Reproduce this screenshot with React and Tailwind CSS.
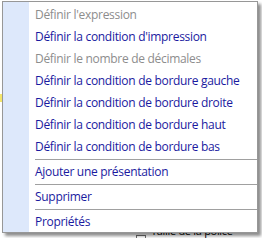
const items = [
  { label: "Définir l'expression", disabled: true },
  { label: "Définir la condition d'impression" },
  { label: "Définir le nombre de décimales", disabled: true },
  { label: "Définir la condition de bordure gauche" },
  { label: "Définir la condition de bordure droite" },
  { label: "Définir la condition de bordure haut" },
  { label: "Définir la condition de bordure bas" },
  { sep: true },
  { label: "Ajouter une présentation" },
  { sep: true },
  { label: "Supprimer" },
  { sep: true },
  { label: "Propriétés" },
];

function MenuItem({ item }) {
  if (item.sep) {
    return (
      <div className="h-[3px] pl-[32px] flex items-center">
        <div className="h-px w-full bg-[#a0a0a0]" />
      </div>
    );
  }
  return (
    <div
      className={
        "h-[22px] pl-[32px] flex items-center whitespace-nowrap " +
        (item.disabled ? "text-[#8d8d8d]" : "text-[#1a1aa0]")
      }
    >
      {item.label}
    </div>
  );
}

export default function App() {
  return (
    <div className="relative w-[262px] h-[238px] bg-white overflow-hidden font-['Open_Sans',sans-serif] text-[12px] tracking-[-0.3px]">
      {/* bits of the page behind the menu */}
      <div className="absolute left-0 top-[94px] w-[3px] h-[8px] bg-[#f5e66a]" />
      <div className="absolute left-[136px] top-[235px] w-[10px] h-[10px] border border-[#707070]" />
      <div className="absolute left-[151px] top-[224px] leading-[14px] text-[11px] text-black">Taille de la police</div>

      <div className="absolute left-[2px] top-[1px] w-[256px] h-[232px] border border-[#979797] bg-[linear-gradient(to_right,#dde8fb_26px,#ffffff_26px)] shadow-[3px_3px_3px_rgba(0,0,0,0.45)] pt-[2px]">
        {items.map((item, i) => (
          <MenuItem key={i} item={item} />
        ))}
      </div>
    </div>
  );
}
